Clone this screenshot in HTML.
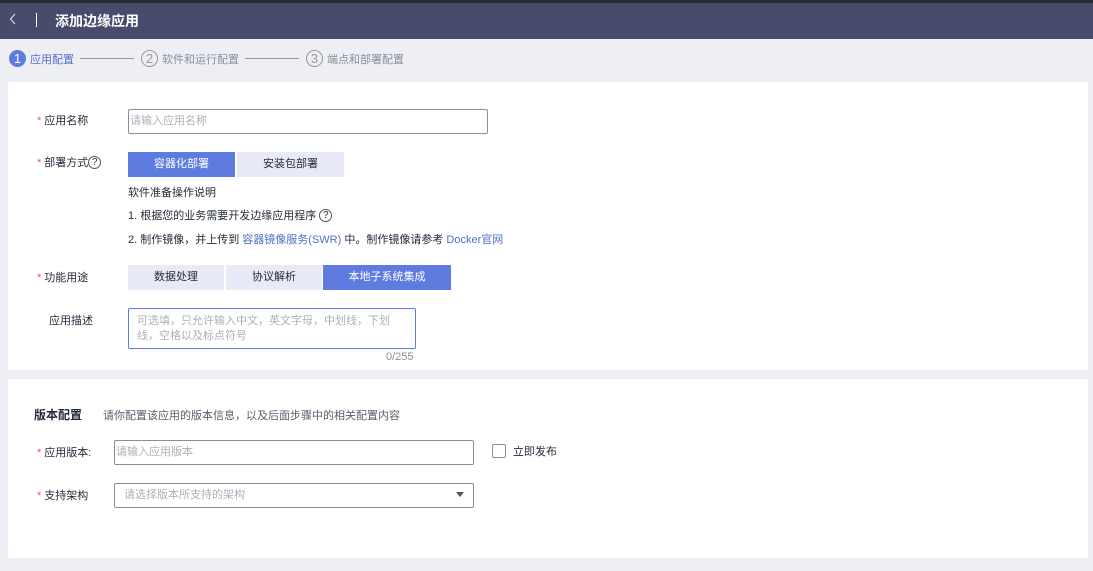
<!DOCTYPE html>
<html><head><meta charset="utf-8"><style>
*{margin:0;padding:0;box-sizing:border-box}
body{width:1093px;height:571px;background:#eeeff4;font-family:"Liberation Sans","Noto Sans CJK SC",sans-serif;font-size:11px;color:#252b3a;position:relative;overflow:hidden}
.a{position:absolute;white-space:nowrap}
.star{color:#e35a5a;font-size:11px;margin-right:3px}
.inp{position:absolute;border:1px solid #8a8e99;border-radius:2px;background:#fff;color:#adb0b8;padding-left:1px;line-height:22px}
.btn{position:absolute;height:25px;line-height:25px;text-align:center;background:#e8ebf7;color:#252b3a}
.btn.on{background:#5e7ce0;color:#fff}
.lk{color:#526ecc}
.q{display:inline-block;width:13px;height:13px;border:1px solid #555;border-radius:50%;font-size:10px;line-height:11px;text-align:center;vertical-align:1px}
</style></head><body>
<div class="a" style="left:0;top:0;width:1093px;height:3px;background:#2b2c33"></div>
<div class="a" style="left:0;top:3px;width:1093px;height:36px;background:#474c6d"></div>
<svg class="a" style="left:9px;top:13px" width="8" height="12"><path d="M6 1L1.5 6L6 11" stroke="#d5d8e6" stroke-width="1.2" fill="none"/></svg>
<div class="a" style="left:36px;top:13px;width:1px;height:14px;background:#fff"></div>
<div class="a" style="left:55px;top:11px;color:#fff;font-size:14px;font-weight:bold">添加边缘应用</div>

<div class="a" style="left:9px;top:50px;width:17px;height:17px;border-radius:50%;background:#5e7ce0;color:#fff;text-align:center;line-height:17px;font-size:13px">1</div>
<div class="a" style="left:30px;top:51px;color:#526ecc">应用配置</div>
<div class="a" style="left:80px;top:58px;width:54px;height:1px;background:#999"></div>
<div class="a" style="left:141px;top:50px;width:17px;height:17px;border-radius:50%;border:1px solid #999;color:#999;text-align:center;line-height:15px;font-size:13px">2</div>
<div class="a" style="left:162px;top:51px;color:#8a8e99">软件和运行配置</div>
<div class="a" style="left:245px;top:58px;width:54px;height:1px;background:#999"></div>
<div class="a" style="left:306px;top:50px;width:17px;height:17px;border-radius:50%;border:1px solid #999;color:#999;text-align:center;line-height:15px;font-size:13px">3</div>
<div class="a" style="left:327px;top:51px;color:#8a8e99">端点和部署配置</div>

<div class="a" style="left:8px;top:82px;width:1080px;height:288px;background:#fff"></div>
<div class="a" style="left:37px;top:112px"><span class="star">*</span>应用名称</div>
<div class="inp" style="left:128px;top:109px;width:360px;height:25px">请输入应用名称</div>
<div class="a" style="left:37px;top:154px"><span class="star">*</span>部署方式<span class="q">?</span></div>
<div class="btn on" style="left:128px;top:152px;width:107px">容器化部署</div>
<div class="btn" style="left:237px;top:152px;width:107px">安装包部署</div>
<div class="a" style="left:128px;top:184px">软件准备操作说明</div>
<div class="a" style="left:128px;top:207px">1. 根据您的业务需要开发边缘应用程序 <span class="q">?</span></div>
<div class="a" style="left:128px;top:231px">2. 制作镜像，并上传到 <span class="lk">容器镜像服务(SWR)</span> 中。制作镜像请参考 <span class="lk">Docker官网</span></div>
<div class="a" style="left:37px;top:269px"><span class="star">*</span>功能用途</div>
<div class="btn" style="left:128px;top:265px;width:96px">数据处理</div>
<div class="btn" style="left:226px;top:265px;width:96px">协议解析</div>
<div class="btn on" style="left:323px;top:265px;width:128px">本地子系统集成</div>
<div class="a" style="left:49px;top:312px">应用描述</div>
<div class="inp" style="left:128px;top:308px;width:288px;height:41px;border-color:#5e7ce0;line-height:15px;padding:5px 8px;white-space:normal">可选填，只允许输入中文，英文字母，中划线，下划线，空格以及标点符号</div>
<div class="a" style="left:386px;top:351px;color:#8a8e99">0/255</div>

<div class="a" style="left:8px;top:379px;width:1080px;height:179px;background:#fff"></div>
<div class="a" style="left:34px;top:406px;font-size:12px;font-weight:bold">版本配置</div>
<div class="a" style="left:103px;top:407px;color:#575d6c">请你配置该应用的版本信息，以及后面步骤中的相关配置内容</div>
<div class="a" style="left:37px;top:444px"><span class="star">*</span>应用版本:</div>
<div class="inp" style="left:114px;top:440px;width:360px;height:25px">请输入应用版本</div>
<div class="a" style="left:492px;top:444px;width:14px;height:14px;border:1px solid #8a8e99;border-radius:2px"></div>
<div class="a" style="left:513px;top:443px">立即发布</div>
<div class="a" style="left:37px;top:487px"><span class="star">*</span>支持架构</div>
<div class="inp" style="left:114px;top:483px;width:360px;height:25px;padding-left:9px">请选择版本所支持的架构</div>
<div class="a" style="left:456px;top:492px;width:0;height:0;border-left:4px solid transparent;border-right:4px solid transparent;border-top:5px solid #555"></div>
</body></html>
